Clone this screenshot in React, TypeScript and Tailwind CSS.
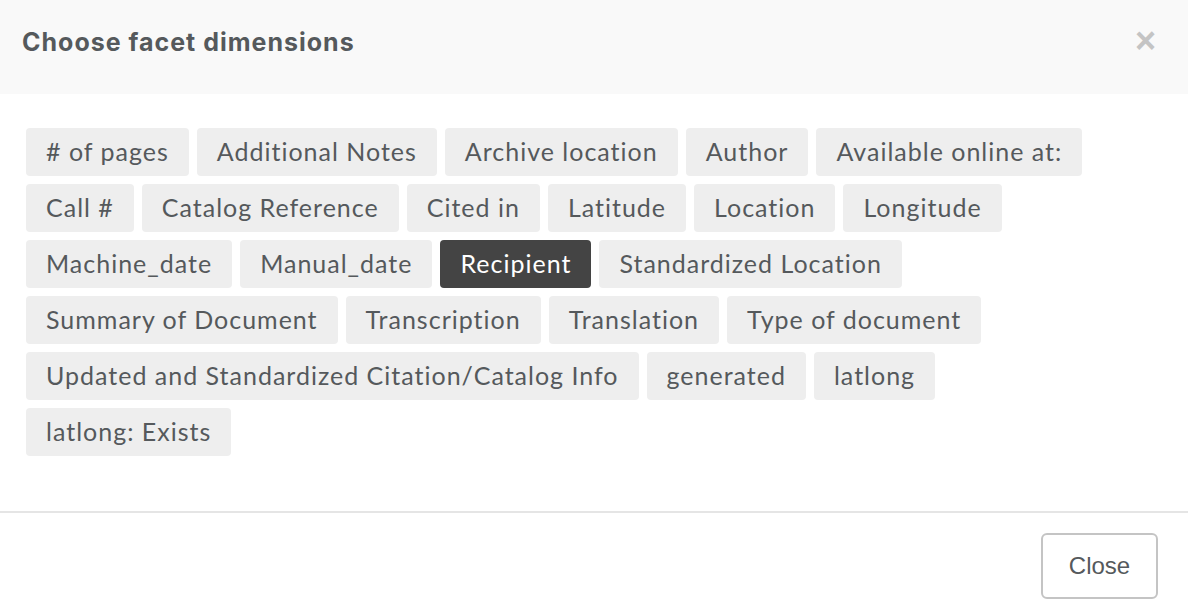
import React from 'react';

const facets = [
  '# of pages',
  'Additional Notes',
  'Archive location',
  'Author',
  'Available online at:',
  'Call #',
  'Catalog Reference',
  'Cited in',
  'Latitude',
  'Location',
  'Longitude',
  'Machine_date',
  'Manual_date',
  'Recipient',
  'Standardized Location',
  'Summary of Document',
  'Transcription',
  'Translation',
  'Type of document',
  'Updated and Standardized Citation/Catalog Info',
  'generated',
  'latlong',
  'latlong: Exists',
];

const selected = 'Recipient';

export default function App() {
  return (
    <div className="w-[1188px] h-[614px] bg-white overflow-hidden flex flex-col">
      <div className="h-[94px] bg-[#f9f9f9] flex items-center justify-between pl-[22px] pr-[32px] pb-[8px]">
        <h1 className="text-[25px] font-bold text-[#55595c] tracking-[1px] font-['Inter',sans-serif]">
          Choose facet dimensions
        </h1>
        <button className="text-[#c4c4c4] text-[36px] font-bold leading-none font-['Liberation_Sans',sans-serif] mb-[4px]">
          ×
        </button>
      </div>
      <div className="flex-1 pt-[34px] pl-[26px] pr-[40px]">
        <div className="flex flex-wrap gap-2 font-['Lato',sans-serif]">
          {facets.map((f) => (
            <span
              key={f}
              className={
                'h-12 px-5 rounded flex items-center text-[25px] tracking-[1px] ' +
                (f === selected ? 'bg-[#444444] text-white' : 'bg-[#eeeeee] text-[#55595c]')
              }
            >
              {f}
            </span>
          ))}
        </div>
      </div>
      <div className="h-[103px] border-t-2 border-[#e5e5e5] flex items-start justify-end pt-[20px] pr-[30px]">
        <button className="w-[117px] h-[66px] border-2 border-[#c4c4c4] rounded-md text-[24px] text-[#55595c] font-['Liberation_Sans',sans-serif]">
          Close
        </button>
      </div>
    </div>
  );
}
